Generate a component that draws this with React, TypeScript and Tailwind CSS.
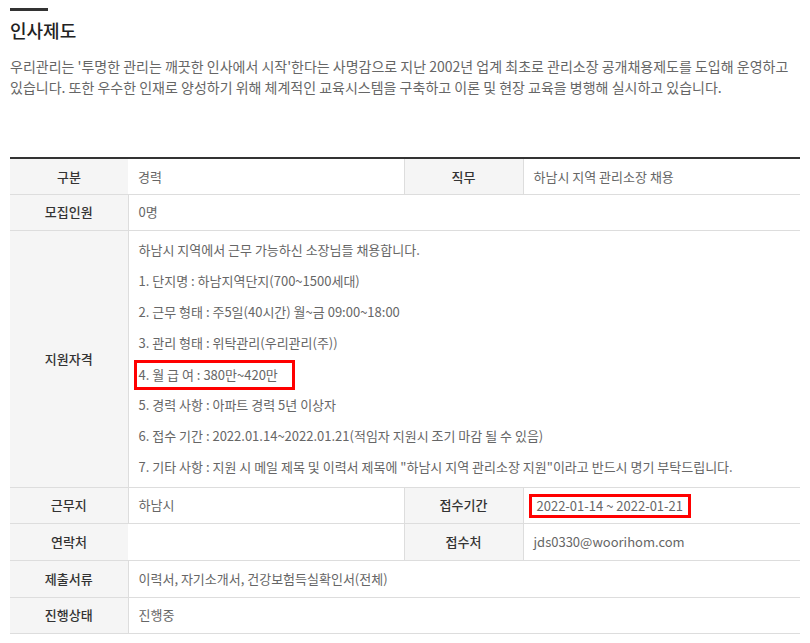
import React from 'react';

const th =
  'bg-[#f5f5f5] text-[#333] font-medium text-center align-middle border-b border-[#ddd] w-[118px]';
const cell = 'text-[#666] text-left align-middle border-b border-[#ddd]';
const td = `${cell} px-[10px]`;

const qualifications = [
  '하남시 지역에서 근무 가능하신 소장님들 채용합니다.',
  '1. 단지명 : 하남지역단지(700~1500세대)',
  '2. 근무 형태 : 주5일(40시간) 월~금 09:00~18:00',
  '3. 관리 형태 : 위탁관리(우리관리(주))',
  'BOX',
  '5. 경력 사항 : 아파트 경력 5년 이상자',
  '6. 접수 기간 : 2022.01.14~2022.01.21(적임자 지원시 조기 마감 될 수 있음)',
  '7. 기타 사항 : 지원 시 메일 제목 및 이력서 제목에 "하남시 지역 관리소장 지원"이라고 반드시 명기 부탁드립니다.',
];

const App = () => {
  return (
    <div
      className="w-[810px] min-h-[643px] bg-white px-[10px] pt-[8px]"
      style={{ fontFamily: '"Noto Sans CJK KR", "Noto Sans", sans-serif' }}
    >
      <div className="w-[38px] h-[3px] bg-[#333]" />
      <h2 className="mt-[5px] text-[18px] leading-[28px] text-[#222] font-medium">인사제도</h2>
      <p className="mt-[12px] text-[14px] leading-[21px] text-[#666] whitespace-nowrap">
        우리관리는 '투명한 관리는 깨끗한 인사에서 시작'한다는 사명감으로 지난 2002년 업계 최초로 관리소장 공개채용제도를 도입해 운영하고
        <br />
        있습니다. 또한 우수한 인재로 양성하기 위해 체계적인 교육시스템을 구축하고 이론 및 현장 교육을 병행해 실시하고 있습니다.
      </p>

      <table className="mt-[59px] w-[790px] border-collapse border-t-2 border-[#333] text-[13px] table-fixed">
        <colgroup>
          <col className="w-[118px]" />
          <col className="w-[276px]" />
          <col className="w-[119px]" />
          <col />
        </colgroup>
        <tbody>
          <tr className="h-[36px]">
            <th className={th}>구분</th>
            <td className={`${td} border-r`}>경력</td>
            <th className={`${th} border-r`}>직무</th>
            <td className={td}>하남시 지역 관리소장 채용</td>
          </tr>
          <tr className="h-[36px]">
            <th className={`${th} border-r`}>모집인원</th>
            <td className={td} colSpan={3}>0명</td>
          </tr>
          <tr>
            <th className={`${th} border-r`}>지원자격</th>
            <td className={`${cell} px-[10px] pt-[3px] pb-[5px]`} colSpan={3}>
              {qualifications.map((line, i) =>
                line === 'BOX' ? (
                  <div key={i} className="h-[31px] flex items-center">
                    <span className="ml-[-5px] mt-[4px] border-[3px] border-[#f00] pl-[2px] pr-[14px] leading-[24px]">
                      4. 월 급 여 : 380만~420만
                    </span>
                  </div>
                ) : (
                  <div key={i} className="leading-[31px] whitespace-nowrap">
                    {line}
                  </div>
                )
              )}
            </td>
          </tr>
          <tr className="h-[36px]">
            <th className={`${th} border-r`}>근무지</th>
            <td className={`${td} border-r`}>하남시</td>
            <th className={`${th} border-r`}>접수기간</th>
            <td className={`${cell} pl-[5px] pr-[10px]`}>
              <span className="mt-[2px] border-[3px] border-[#f00] px-[5px] leading-[18px] inline-block">
                2022-01-14 ~ 2022-01-21
              </span>
            </td>
          </tr>
          <tr className="h-[37px]">
            <th className={th}>연락처</th>
            <td className={`${td} border-r`}></td>
            <th className={`${th} border-r`}>접수처</th>
            <td className={td}>jds0330@woorihom.com</td>
          </tr>
          <tr className="h-[37px]">
            <th className={`${th} border-r`}>제출서류</th>
            <td className={td} colSpan={3}>이력서, 자기소개서, 건강보험득실확인서(전체)</td>
          </tr>
          <tr className="h-[36px]">
            <th className={`${th} border-r`}>진행상태</th>
            <td className={td} colSpan={3}>진행중</td>
          </tr>
        </tbody>
      </table>
    </div>
  );
};

export default App;
